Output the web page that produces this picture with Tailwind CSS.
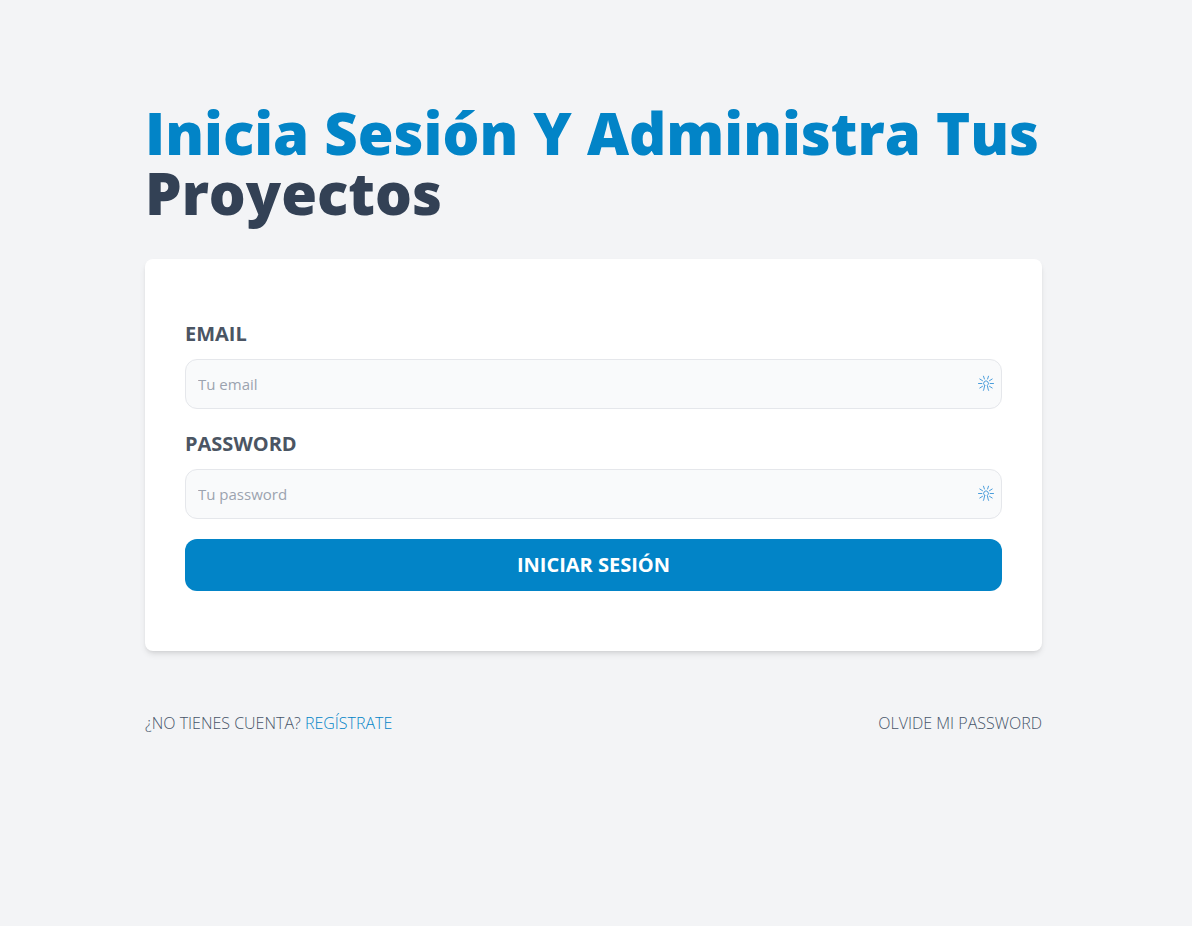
<!DOCTYPE html>
<html lang="es">
<head>
<meta charset="utf-8">
<meta name="viewport" content="width=device-width, initial-scale=1">
<title>Iniciar sesión</title>
<script src="https://cdn.jsdelivr.net/npm/@tailwindcss/browser@4"></script>
</head>
<body class="min-h-screen bg-[#f3f4f6] font-['Open_Sans',sans-serif]">
<svg class="hidden" aria-hidden="true">
<symbol id="key-rays" viewBox="0 0 16 16">
<g fill="none" stroke="#4a9ddb" stroke-width="1" stroke-linecap="round" stroke-linejoin="round">
<path d="M.5 8.5H3.8M12.2 8.5h3.3M1.8 4l2.7 1.7M14.2 4l-2.7 1.7M1.8 13l2.7-1.7M14.2 13l-2.7-1.7M5.5 1.2l.9 2.8M10.5 1.2l-.9 2.8M5.4 15.4l.4-1M10.6 15.4l-.4-1"/>
<path d="M6.7 10.4a2.4 2.4 0 1 1 2.6 0l.7 3.2M6.7 10.4l-.7 3.2"/>
</g>
</symbol>
</svg>
<main class="flex justify-center pt-[103px] pr-[25px] pb-5 pl-5">
<div class="w-full max-w-[897px]">
<h1 class="text-[58px] leading-[60px] font-extrabold text-[#0284c7] capitalize">Inicia sesión y administra tus <span class="text-[#334155]">proyectos</span></h1>
<form class="mt-9 rounded-lg bg-white px-10 py-[60px] shadow-md">
<div class="mb-5">
<label for="email" class="block pt-px text-[20px] leading-7 font-bold text-[#4b5563] uppercase">Email</label>
<div class="relative mt-[11px]">
<input id="email" type="email" placeholder="Tu email" class="block h-[50px] w-full rounded-xl border border-[#e5e7eb] bg-[#f9fafb] px-3 text-[15px] placeholder:text-[#9ca3af]">
<svg class="absolute top-4 right-2 size-4" aria-hidden="true"><use href="#key-rays"/></svg>
</div>
</div>
<div class="mb-5">
<label for="password" class="block pt-px text-[20px] leading-7 font-bold text-[#4b5563] uppercase">Password</label>
<div class="relative mt-[11px]">
<input id="password" type="password" placeholder="Tu password" class="block h-[50px] w-full rounded-xl border border-[#e5e7eb] bg-[#f9fafb] px-3 text-[15px] placeholder:text-[#9ca3af]">
<svg class="absolute top-4 right-2 size-4" aria-hidden="true"><use href="#key-rays"/></svg>
</div>
</div>
<button type="submit" class="block w-full rounded-xl bg-[#0284c7] py-3 text-[20px] leading-7 font-bold text-white uppercase">Iniciar sesión</button>
</form>
<nav class="mt-[60px] flex flex-wrap justify-between gap-x-6 text-base leading-6 font-light text-[#475569] uppercase">
<p>¿No tienes cuenta? <a href="#" class="text-[#0284c7]">Regístrate</a></p>
<a href="#">Olvide mi password</a>
</nav>
</div>
</main>
</body>
</html>
